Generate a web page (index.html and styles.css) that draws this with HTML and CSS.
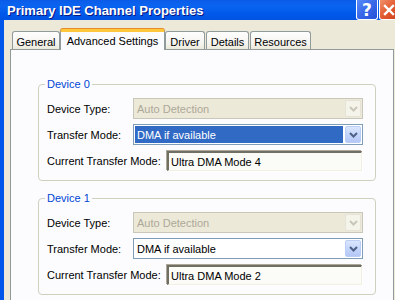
FILE: index.html
```html
<!DOCTYPE html>
<html lang="en">

<head>
    <meta charset="UTF-8">
    <meta name="viewport" content="width=device-width, initial-scale=1.0">
    <title>Primary IDE Channel Properties</title>
    <link rel="stylesheet" href="styles.css">
</head>

<body>
    <div class="window">
        <div class="titlebar">
            <span class="title">Primary IDE Channel Properties</span>
            <div class="caption-btns">
                <span class="cap-btn help">?</span>
                <span class="cap-btn close">
                    <svg width="14" height="14" viewBox="0 0 14 14">
                        <path d="M3 3 L11 11 M11 3 L3 11" stroke="#fff" stroke-width="2.4" stroke-linecap="square" fill="none" />
                    </svg>
                </span>
            </div>
        </div>

        <div class="frame">
            <div class="client">
                <div class="tabs">
                    <span class="tab tab-general">General</span>
                    <span class="tab tab-adv active">Advanced Settings</span>
                    <span class="tab tab-driver">Driver</span>
                    <span class="tab tab-details">Details</span>
                    <span class="tab tab-res">Resources</span>
                </div>

                <div class="panel">
                    <fieldset class="group">
                        <legend>Device 0</legend>
                        <div class="rows">
                            <div class="row">
                                <span class="label">Device Type:</span>
                                <div class="combo disabled">
                                    <span class="value">Auto Detection</span>
                                    <span class="drop">
                                        <svg width="9" height="6" viewBox="0 0 9 6"><path d="M1 1 L4.5 4.5 L8 1" stroke="#c9c7ba" stroke-width="2" fill="none" /></svg>
                                    </span>
                                </div>
                            </div>
                            <div class="row">
                                <span class="label">Transfer Mode:</span>
                                <div class="combo">
                                    <span class="value selected">DMA if available</span>
                                    <span class="drop">
                                        <svg width="9" height="6" viewBox="0 0 9 6"><path d="M1 1 L4.5 4.5 L8 1" stroke="#4d6185" stroke-width="2" fill="none" /></svg>
                                    </span>
                                </div>
                            </div>
                            <div class="row">
                                <span class="label wide">Current Transfer Mode:</span>
                                <div class="textbox">Ultra DMA Mode 4</div>
                            </div>
                        </div>
                    </fieldset>

                    <fieldset class="group">
                        <legend>Device 1</legend>
                        <div class="rows">
                            <div class="row">
                                <span class="label">Device Type:</span>
                                <div class="combo disabled">
                                    <span class="value">Auto Detection</span>
                                    <span class="drop">
                                        <svg width="9" height="6" viewBox="0 0 9 6"><path d="M1 1 L4.5 4.5 L8 1" stroke="#c9c7ba" stroke-width="2" fill="none" /></svg>
                                    </span>
                                </div>
                            </div>
                            <div class="row">
                                <span class="label">Transfer Mode:</span>
                                <div class="combo">
                                    <span class="value">DMA if available</span>
                                    <span class="drop">
                                        <svg width="9" height="6" viewBox="0 0 9 6"><path d="M1 1 L4.5 4.5 L8 1" stroke="#4d6185" stroke-width="2" fill="none" /></svg>
                                    </span>
                                </div>
                            </div>
                            <div class="row">
                                <span class="label wide">Current Transfer Mode:</span>
                                <div class="textbox">Ultra DMA Mode 2</div>
                            </div>
                        </div>
                    </fieldset>
                </div>
            </div>
        </div>
    </div>
</body>

</html>
```

FILE: styles.css
```css
* {
    box-sizing: border-box;
}

body {
    margin: 0;
    width: 395px;
    height: 300px;
    overflow: hidden;
    font-family: "Liberation Sans", Arial, sans-serif;
    font-size: 11px;
    color: #000;
    background-color: #ece9d8;
}

.window {
    display: flex;
    flex-direction: column;
    height: 300px;
}

/* title bar */
.titlebar {
    height: 21px;
    display: flex;
    align-items: flex-start;
    justify-content: space-between;
    background: linear-gradient(#0a5ce8 0, #0a64f0 6px, #0058ea 14px, #0052e0 21px);
}

.title {
    padding: 3px 0 0 7px;
    color: #fff;
    font-size: 13px;
    font-weight: bold;
    line-height: 15px;
    text-shadow: 1px 1px 0 #0a1883;
}

.caption-btns {
    display: flex;
    gap: 1px;
}

.cap-btn {
    display: flex;
    align-items: center;
    justify-content: center;
    height: 20px;
    border: 1px solid #fff;
    border-top: none;
    border-radius: 0 0 3px 3px;
    color: #fff;
}

.help {
    width: 22px;
    background: linear-gradient(135deg, #5a8cf8 0, #3867e8 50%, #2452d8 100%);
    font-size: 17px;
    font-weight: bold;
    font-family: "DejaVu Sans", sans-serif;
}

.close {
    width: 22px;
    margin-right: -6px;
    justify-content: flex-start;
    padding-left: 2px;
    background: linear-gradient(135deg, #f0916a 0, #e2582e 50%, #c8401c 100%);
}

/* frame */
.frame {
    flex: 1;
    display: flex;
    border-left: 4px solid #0055ea;
}

.client {
    flex: 1;
    display: flex;
    flex-direction: column;
    padding: 9px 1px 0 6px;
    background-color: #ece9d8;
}

/* tabs */
.tabs {
    display: flex;
    align-items: flex-end;
    padding-left: 2px;
    height: 20px;
}

.tab {
    height: 18px;
    padding-top: 4px;
    text-align: center;
    border: 1px solid #919b9c;
    border-bottom: none;
    border-radius: 3px 3px 0 0;
    background: linear-gradient(#fefefe, #f4f3ee 70%, #ece9d8);
    line-height: 13px;
}

.tab.active {
    height: 21px;
    margin-bottom: -1px;
    padding-top: 3px;
    border-top: 3px solid #ffc83c;
    background: #fcfcfe;
    position: relative;
    z-index: 1;
    box-shadow: 0 -1px 0 #e68b2c;
}

.tab-general { width: 48px; }
.tab-adv { width: 105px; }
.tab-driver { width: 40px; }
.tab-details { width: 43px; margin-left: 1px; }
.tab-res { width: 61px; margin-left: 1px; }

/* panel */
.panel {
    flex: 1;
    border: 1px solid #919b9c;
    border-bottom: none;
    background-color: #fcfcfe;
    padding: 28px 0 0 0;
}

.group {
    margin: 0 17px 11px 27px;
    padding: 0 12px 9px 8px;
    border: 1px solid #d0d0bf;
    border-radius: 4px;
    min-width: 0;
}

.group legend {
    padding: 0 2px;
    margin-left: -2px;
    color: #0046d5;
    line-height: 13px;
}

.rows {
    display: flex;
    flex-direction: column;
    gap: 5px;
    padding-top: 7px;
}

.row {
    display: flex;
    align-items: center;
    height: 21px;
}

.label {
    width: 86px;
    flex-shrink: 0;
}

.label.wide {
    width: 120px;
}

/* combo box */
.combo {
    flex: 1;
    display: flex;
    height: 21px;
    padding: 1px;
    border: 1px solid #7f9db9;
    background-color: #fff;
}

.combo .value {
    flex: 1;
    display: flex;
    align-items: center;
    padding-left: 2px;
    margin-right: 2px;
}

.combo .value.selected {
    background-color: #316ac5;
    color: #fff;
}

.drop {
    width: 16px;
    display: flex;
    align-items: center;
    justify-content: center;
    border: 1px solid #b9cdf6;
    border-radius: 2px;
    background: linear-gradient(#dbe6fe, #c1d3fb 60%, #b4c7f5);
}

.combo.disabled {
    border-color: #c9c7ba;
    background-color: #ece9d8;
    color: #aca899;
}

.combo.disabled .drop {
    border-color: #e5e3d8;
    background: #f5f4ea;
}

/* read-only text box */
.textbox {
    flex: 1;
    height: 20px;
    margin-right: 1px;
    padding: 3px 0 0 2px;
    background-color: #fbfbf7;
    border-top: 2px solid #716f64;
    border-left: 2px solid #716f64;
    border-right: 1px solid #f1efe2;
    border-bottom: 1px solid #f1efe2;
    box-shadow: -1px -1px 0 #aca899, 1px 1px 0 #fff;
    line-height: 13px;
}
```
